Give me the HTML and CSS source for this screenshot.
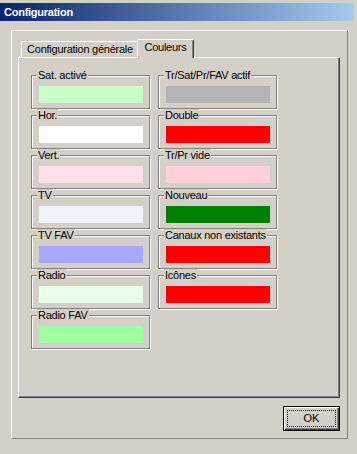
FILE: index.html
```html
<!DOCTYPE html>
<html lang="fr">

<head>
  <meta charset="UTF-8">
  <title>Configuration</title>
  <link rel="stylesheet" href="styles.css">
</head>

<body>
  <div class="titlebar">Configuration</div>

  <div class="frame">
    <!-- onglets -->
    <div class="tabs">
      <div class="tab">Configuration générale</div>
      <div class="tab active">Couleurs</div>
    </div>

    <div class="panel">
      <div class="col">
        <fieldset class="group"><legend>Sat. activé</legend><div class="swatch sat"></div></fieldset>
        <fieldset class="group"><legend>Hor.</legend><div class="swatch hor"></div></fieldset>
        <fieldset class="group"><legend>Vert.</legend><div class="swatch vert"></div></fieldset>
        <fieldset class="group"><legend>TV</legend><div class="swatch tv"></div></fieldset>
        <fieldset class="group"><legend>TV FAV</legend><div class="swatch tvfav"></div></fieldset>
        <fieldset class="group"><legend>Radio</legend><div class="swatch radio"></div></fieldset>
        <fieldset class="group"><legend>Radio FAV</legend><div class="swatch radiofav"></div></fieldset>
      </div>
      <div class="col">
        <fieldset class="group"><legend>Tr/Sat/Pr/FAV actif</legend><div class="swatch actif"></div></fieldset>
        <fieldset class="group"><legend>Double</legend><div class="swatch red"></div></fieldset>
        <fieldset class="group"><legend>Tr/Pr vide</legend><div class="swatch vide"></div></fieldset>
        <fieldset class="group"><legend>Nouveau</legend><div class="swatch nouveau"></div></fieldset>
        <fieldset class="group"><legend>Canaux non existants</legend><div class="swatch red"></div></fieldset>
        <fieldset class="group"><legend>Icônes</legend><div class="swatch red"></div></fieldset>
      </div>
    </div>

    <div class="buttons">
      <button class="ok" type="button"><span>OK</span></button>
    </div>
  </div>
</body>

</html>
```

FILE: styles.css
```css
body {
  margin: 0;
  width: 357px;
  height: 454px;
  overflow: hidden;
  background-color: #d4d0c8;
  font-family: "Liberation Sans", Arial, sans-serif;
  font-size: 11px;
  letter-spacing: -0.25px;
  color: #000;
}

.titlebar {
  margin-top: 3px;
  width: 350px;
  height: 18px;
  padding-left: 4px;
  line-height: 18px;
  font-weight: bold;
  color: #fff;
  background: linear-gradient(to right, #0a246a, #a6caf0);
}

.frame {
  box-sizing: border-box;
  width: 337px;
  height: 409px;
  margin: 9px 0 0 11px;
  padding: 8px 0 0 6px;
  border-top: 1px solid #fff;
  border-left: 1px solid #fff;
  border-right: 1px solid #808080;
  border-bottom: 1px solid #808080;
}

.tabs {
  display: flex;
  height: 18px;
  padding-left: 3px;
}

.tab {
  box-sizing: border-box;
  flex: none;
  height: 16px;
  margin-top: 2px;
  padding: 0;
  line-height: 15px;
  text-align: center;
  white-space: nowrap;
  border-top: 1px solid #fff;
  border-left: 1px solid #fff;
  border-right: 1px solid #404040;
  border-radius: 2px 2px 0 0;
  box-shadow: inset -1px 0 #808080;
  background-color: #d4d0c8;
}

.tab:first-child {
  width: 118px;
}

.tab.active {
  position: relative;
  z-index: 1;
  width: 57px;
  height: 19px;
  margin: 0 -2px 0 -2px;
  line-height: 15px;
}

.panel {
  box-sizing: border-box;
  display: flex;
  gap: 8px;
  width: 322px;
  height: 341px;
  padding: 11px 0 0 12px;
  border-top: 1px solid #fff;
  border-left: 1px solid #fff;
  border-right: 1px solid #404040;
  border-bottom: 1px solid #404040;
  box-shadow: inset -1px -1px #808080;
}

.col {
  display: flex;
  flex-direction: column;
  width: 119px;
}

.group {
  box-sizing: border-box;
  width: 119px;
  min-width: 0;
  margin: 0;
  padding: 4px 6px 5px 7px;
  border: 1px solid #808080;
  box-shadow: inset 1px 1px #fff, 1px 1px #fff;
}

.group legend {
  margin-left: -2px;
  padding: 0 1px;
  line-height: 13px;
  background-color: #d4d0c8;
  white-space: nowrap;
}

.swatch {
  height: 17px;
}

.sat { background-color: #c8ffc8; }
.hor { background-color: #fff; }
.vert { background-color: #ffe0e6; }
.tv { background-color: #f2f2ff; }
.tvfav { background-color: #a8a8ff; }
.radio { background-color: #e8ffe8; }
.radiofav { background-color: #a0ffa0; }
.actif { background-color: #b4b4b4; }
.red { background-color: #ff0000; }
.vide { background-color: #ffd0d8; }
.nouveau { background-color: #008000; }

.buttons {
  display: flex;
  justify-content: flex-end;
  width: 322px;
  padding-top: 8px;
}

.ok {
  box-sizing: border-box;
  width: 57px;
  height: 25px;
  padding: 3px;
  border: 1px solid #000;
  background-color: #d4d0c8;
  box-shadow: inset 1px 1px #fff, inset -1px -1px #404040, inset -2px -2px #808080;
  font: inherit;
  letter-spacing: 0;
  color: #000;
}

.ok span {
  display: block;
  height: 100%;
  box-sizing: border-box;
  line-height: 15px;
  border: 1px dotted #000;
}
```
